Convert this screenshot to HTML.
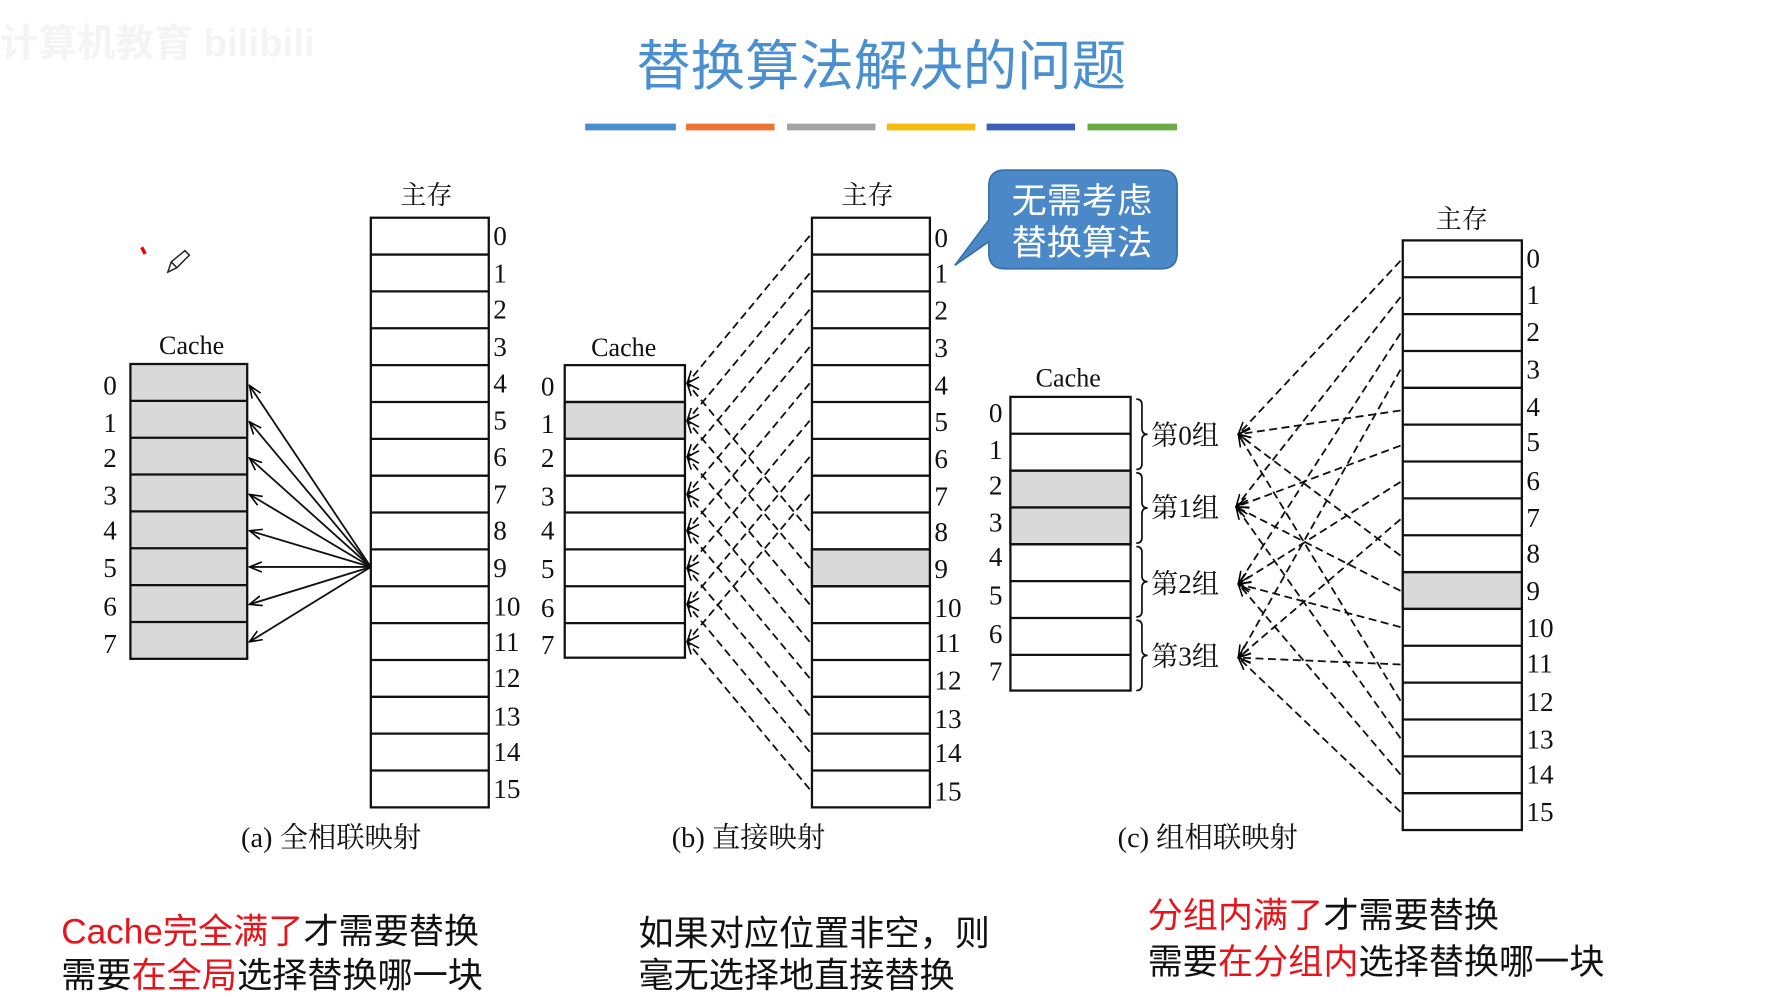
<!DOCTYPE html>
<html><head><meta charset="utf-8"><style>
html,body{margin:0;padding:0;background:#fff;width:1777px;height:999px;overflow:hidden}
svg{display:block}
.s{font-family:"Liberation Serif","Noto Serif CJK SC",serif;fill:#111}
.t{font-family:"Liberation Sans","Noto Sans CJK SC",sans-serif}
</style></head><body>
<svg width="1777" height="999" viewBox="0 0 1567 881" preserveAspectRatio="none" xmlns="http://www.w3.org/2000/svg">
<defs>
<marker id="ah" viewBox="0 0 12 10" refX="11" refY="5" markerWidth="12" markerHeight="10" markerUnits="userSpaceOnUse" orient="auto"><path d="M0,0.5 L11,5 L0,9.5" fill="none" stroke="#000" stroke-width="1.4"/></marker>
</defs>
<rect width="1567" height="881" fill="#fff"/>
<text x="0" y="50" class="t" font-size="34" fill="#f4f4f4" font-weight="bold">计算机教育 bilibili</text>
<text x="777" y="75" class="t" font-size="48" fill="#4a8fd0" text-anchor="middle">替换算法解决的问题</text>
<g stroke-width="6">
<line x1="516" y1="112" x2="596" y2="112" stroke="#4a8ed2"/>
<line x1="605" y1="112" x2="683" y2="112" stroke="#ec7430"/>
<line x1="694" y1="112" x2="772" y2="112" stroke="#a3a3a3"/>
<line x1="782" y1="112" x2="860" y2="112" stroke="#f8bb0c"/>
<line x1="870" y1="112" x2="948" y2="112" stroke="#3d5fb5"/>
<line x1="959" y1="112" x2="1038" y2="112" stroke="#6aab43"/>
</g>
<path d="M125,218 l3,6" stroke="#e00" stroke-width="3"/>
<path d="M148,240 l3,-9 l12,-10 l4,4 l-11,11 z M151,231 l5,5" fill="none" stroke="#222" stroke-width="1.3"/>

<g class="s" font-size="23" text-anchor="middle">
<text x="376" y="180">主存</text><text x="765" y="180">主存</text><text x="1289" y="201">主存</text>
<text x="169" y="312">Cache</text><text x="550" y="314">Cache</text><text x="942" y="341">Cache</text>
</g>
<g class="s" font-size="25" text-anchor="middle">
<text x="292" y="747">(a) 全相联映射</text><text x="660" y="747">(b) 直接映射</text><text x="1065" y="747">(c) 组相联映射</text>
</g>

<g fill="#fff" stroke="#111" stroke-width="2">
<rect x="327" y="192" width="104" height="520"/>
<rect x="716" y="192" width="104" height="520"/>
<rect x="716" y="484.5" width="104" height="32.5" fill="#d9d9d9"/>
<rect x="1237" y="212" width="105" height="520"/>
<rect x="1237" y="504.5" width="105" height="32.5" fill="#d9d9d9"/>
<rect x="115" y="321" width="103" height="260" fill="#d9d9d9"/>
<rect x="498" y="322" width="106" height="258"/>
<rect x="498" y="354.5" width="106" height="32.5" fill="#d9d9d9"/>
<rect x="891" y="350" width="106" height="259"/>
<rect x="891" y="415" width="106" height="65" fill="#d9d9d9"/>
</g>
<g stroke="#111" stroke-width="2">
<path d="M327,224.5h104M327,257h104M327,289.5h104M327,322h104M327,354.5h104M327,387h104M327,419.5h104M327,452h104M327,484.5h104M327,517h104M327,549.5h104M327,582h104M327,614.5h104M327,647h104M327,679.5h104"/>
<path d="M716,224.5h104M716,257h104M716,289.5h104M716,322h104M716,354.5h104M716,387h104M716,419.5h104M716,452h104M716,484.5h104M716,517h104M716,549.5h104M716,582h104M716,614.5h104M716,647h104M716,679.5h104"/>
<path d="M1237,244.5h105M1237,277h105M1237,309.5h105M1237,342h105M1237,374.5h105M1237,407h105M1237,439.5h105M1237,472h105M1237,504.5h105M1237,537h105M1237,569.5h105M1237,602h105M1237,634.5h105M1237,667h105M1237,699.5h105"/>
<path d="M115,353.5h103M115,386h103M115,418.5h103M115,451h103M115,483.5h103M115,516h103M115,548.5h103"/>
<path d="M498,354.5h106M498,387h106M498,419.5h106M498,452h106M498,484.5h106M498,517h106M498,549.5h106"/>
<path d="M891,382.5h106M891,415h106M891,447.5h106M891,480h106M891,512.5h106M891,545h106M891,577.5h106"/>
</g>
<g fill="none" stroke="#111" stroke-width="1.5">
<path d="M1002,352 q5,0 5,5 v21 q0,5 5,5 q-5,0 -5,5 v21 q0,5 -5,5"/>
<path d="M1002,417 q5,0 5,5 v21 q0,5 5,5 q-5,0 -5,5 v21 q0,5 -5,5"/>
<path d="M1002,482 q5,0 5,5 v21 q0,5 5,5 q-5,0 -5,5 v21 q0,5 -5,5"/>
<path d="M1002,547 q5,0 5,5 v21 q0,5 5,5 q-5,0 -5,5 v21 q0,5 -5,5"/>
</g>
<g class="s" font-size="24">
<text x="1015" y="392">第0组</text><text x="1015" y="456">第1组</text><text x="1015" y="523">第2组</text><text x="1015" y="587">第3组</text>
</g>

<g class="s" font-size="24" dominant-baseline="central">
<g text-anchor="start">
<text x="435" y="208">0</text><text x="435" y="241">1</text><text x="435" y="273">2</text><text x="435" y="306">3</text><text x="435" y="338">4</text><text x="435" y="371">5</text><text x="435" y="403">6</text><text x="435" y="436">7</text><text x="435" y="468">8</text><text x="435" y="501">9</text><text x="435" y="535">10</text><text x="435" y="566">11</text><text x="435" y="598">12</text><text x="435" y="632">13</text><text x="435" y="663">14</text><text x="435" y="696">15</text>
<text x="824" y="210">0</text><text x="824" y="241">1</text><text x="824" y="274">2</text><text x="824" y="307">3</text><text x="824" y="340">4</text><text x="824" y="372">5</text><text x="824" y="405">6</text><text x="824" y="438">7</text><text x="824" y="469">8</text><text x="824" y="502">9</text><text x="824" y="536">10</text><text x="824" y="567">11</text><text x="824" y="600">12</text><text x="824" y="634">13</text><text x="824" y="664">14</text><text x="824" y="698">15</text>
<text x="1346" y="228">0</text><text x="1346" y="260">1</text><text x="1346" y="293">2</text><text x="1346" y="326">3</text><text x="1346" y="359">4</text><text x="1346" y="390">5</text><text x="1346" y="424">6</text><text x="1346" y="457">7</text><text x="1346" y="488">8</text><text x="1346" y="521">9</text><text x="1346" y="554">10</text><text x="1346" y="585">11</text><text x="1346" y="619">12</text><text x="1346" y="652">13</text><text x="1346" y="683">14</text><text x="1346" y="716">15</text>
</g>
<g text-anchor="middle">
<text x="97" y="340">0</text><text x="97" y="373">1</text><text x="97" y="404">2</text><text x="97" y="437">3</text><text x="97" y="468">4</text><text x="97" y="501">5</text><text x="97" y="535">6</text><text x="97" y="568">7</text>
<text x="483" y="341">0</text><text x="483" y="374">1</text><text x="483" y="404">2</text><text x="483" y="438">3</text><text x="483" y="468">4</text><text x="483" y="502">5</text><text x="483" y="536">6</text><text x="483" y="569">7</text>
<text x="878" y="364">0</text><text x="878" y="397">1</text><text x="878" y="428">2</text><text x="878" y="461">3</text><text x="878" y="491">4</text><text x="878" y="525">5</text><text x="878" y="559">6</text><text x="878" y="592">7</text>
</g>
</g>

<g stroke="#111" stroke-width="1.6" marker-end="url(#ah)">
<line x1="327" y1="500" x2="220" y2="340"/><line x1="327" y1="500" x2="220" y2="372"/><line x1="327" y1="500" x2="220" y2="404"/><line x1="327" y1="500" x2="220" y2="436"/><line x1="327" y1="500" x2="220" y2="468"/><line x1="327" y1="500" x2="220" y2="500"/><line x1="327" y1="500" x2="220" y2="533"/><line x1="327" y1="500" x2="220" y2="566"/>
</g>
<g stroke="#111" stroke-width="1.6" stroke-dasharray="7,4" marker-end="url(#ah)">
<line x1="714" y1="208" x2="606" y2="338"/><line x1="714" y1="241" x2="606" y2="371"/><line x1="714" y1="273" x2="606" y2="403"/><line x1="714" y1="306" x2="606" y2="436"/><line x1="714" y1="338" x2="606" y2="468"/><line x1="714" y1="371" x2="606" y2="501"/><line x1="714" y1="403" x2="606" y2="533"/><line x1="714" y1="436" x2="606" y2="566"/>
<line x1="714" y1="468" x2="606" y2="338"/><line x1="714" y1="501" x2="606" y2="371"/><line x1="714" y1="533" x2="606" y2="403"/><line x1="714" y1="566" x2="606" y2="436"/><line x1="714" y1="598" x2="606" y2="468"/><line x1="714" y1="631" x2="606" y2="501"/><line x1="714" y1="663" x2="606" y2="533"/><line x1="714" y1="696" x2="606" y2="566"/>
</g>
<g stroke="#111" stroke-width="1.6" stroke-dasharray="7,4" marker-end="url(#ah)">
<line x1="1235" y1="230" x2="1092" y2="383"/><line x1="1235" y1="262" x2="1090" y2="447"/><line x1="1235" y1="294" x2="1092" y2="515"/><line x1="1235" y1="326" x2="1092" y2="580"/>
<line x1="1235" y1="362" x2="1092" y2="383"/><line x1="1235" y1="393" x2="1090" y2="447"/><line x1="1235" y1="425" x2="1092" y2="515"/><line x1="1235" y1="458" x2="1092" y2="580"/>
<line x1="1235" y1="490" x2="1092" y2="383"/><line x1="1235" y1="521" x2="1090" y2="447"/><line x1="1235" y1="553" x2="1092" y2="515"/><line x1="1235" y1="586" x2="1092" y2="580"/>
<line x1="1235" y1="618" x2="1092" y2="383"/><line x1="1235" y1="651" x2="1090" y2="447"/><line x1="1235" y1="683" x2="1092" y2="515"/><line x1="1235" y1="716" x2="1092" y2="580"/>
</g>

<path d="M886,150 h138 q14,0 14,14 v59 q0,14 -14,14 h-138 q-14,0 -14,-14 v-10 l-30,21 l30,-40 v-30 q0,-14 14,-14 z" fill="#4a88c8" stroke="#3a70a8" stroke-width="1.5"/>
<g class="t" font-size="31" fill="#fff" text-anchor="middle">
<text x="954" y="188">无需考虑</text><text x="954" y="225">替换算法</text>
</g>

<g class="t" font-size="31" fill="#111">
<text x="54" y="832"><tspan fill="#e8141b">Cache完全满了</tspan>才需要替换</text>
<text x="54" y="871">需要<tspan fill="#e8141b">在全局</tspan>选择替换哪一块</text>
<text x="563" y="834">如果对应位置非空，则</text>
<text x="563" y="871">毫无选择地直接替换</text>
<text x="1012" y="818"><tspan fill="#e8141b">分组内满了</tspan>才需要替换</text>
<text x="1012" y="859">需要<tspan fill="#e8141b">在分组内</tspan>选择替换哪一块</text>
</g>
</svg>
</body></html>
